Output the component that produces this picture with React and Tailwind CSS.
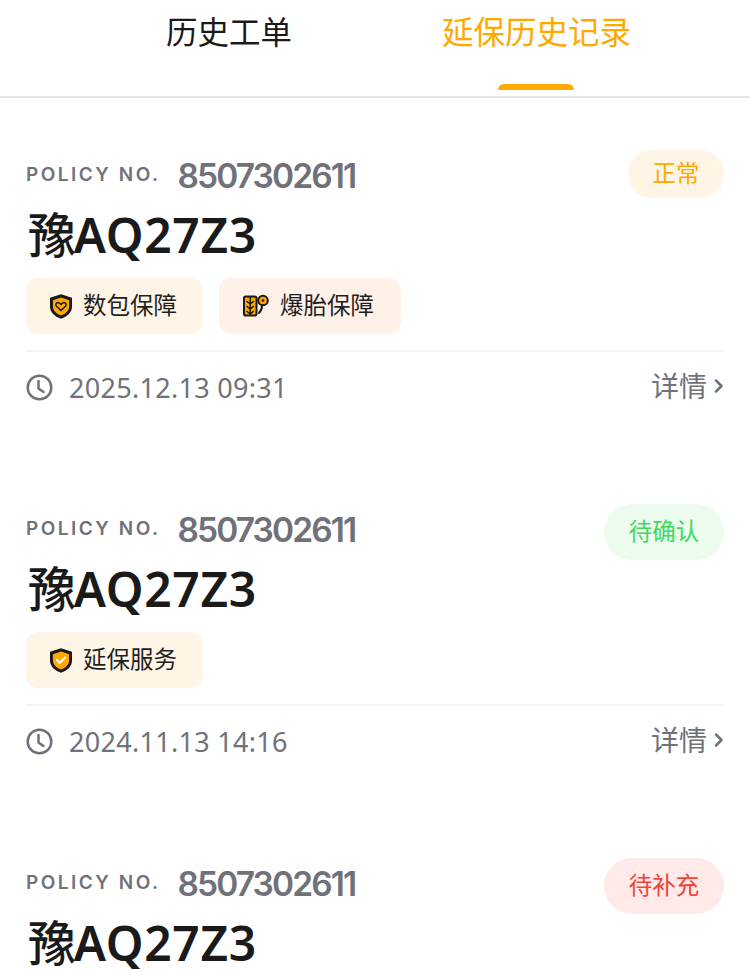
const cjk = "font-['Noto_Sans','Noto_Sans_CJK_SC',sans-serif]";

function ShieldHeart() {
  return (
    <svg width="22" height="25" viewBox="1.5 1.5 19 21" fill="none">
      <path d="M11 1.500 20.500 4.500V12c0 5-3.800 8.600-9.500 10.500C5.300 20.600 1.500 17 1.500 12V4.500Z" fill="#1a1a1a" />
      <path d="M11 4.300 18 6.500V12c0 3.500-2.800 6.200-7 7.800C6.800 18.200 4 15.500 4 12V6.500Z" fill="#ffa800" />
      <path d="M11 15.500 6.900 11.500C5.700 9.900 7.800 7.700 9.600 9L11 10.200 12.400 9C14.200 7.700 16.300 9.900 15.100 11.500Z" fill="#ffa800" stroke="#1a1a1a" strokeWidth="1.300" strokeLinejoin="round" />
    </svg>
  );
}

function ShieldCheck() {
  return (
    <svg width="22" height="25" viewBox="1.5 1.5 19 21" fill="none">
      <path d="M11 1.500 20.500 4.500V12c0 5-3.800 8.600-9.500 10.500C5.300 20.600 1.500 17 1.500 12V4.500Z" fill="#1a1a1a" />
      <path d="M11 4.300 18 6.500V12c0 3.500-2.800 6.200-7 7.800C6.800 18.200 4 15.500 4 12V6.500Z" fill="#ffa800" />
      <path d="M7.500 11.500 10 14 14.700 9.500" stroke="#fff" strokeWidth="1.800" strokeLinecap="round" strokeLinejoin="round" />
    </svg>
  );
}

function TyreGauge() {
  return (
    <svg width="26" height="24" viewBox="0 0 26 24" fill="none">
      <rect x="1" y="2.500" width="12.500" height="19" rx="1.800" fill="#ffa800" stroke="#1a1a1a" strokeWidth="2" />
      <path d="M7.200 3v18M3.500 7l3.700 3 3.700-3M3.500 12l3.700 3 3.700-3M3.500 17l3.700 3 3.700-3" stroke="#1a1a1a" strokeWidth="1.500" />
      <circle cx="20" cy="6.500" r="4.800" fill="#ffa800" stroke="#1a1a1a" strokeWidth="2" />
      <circle cx="20" cy="6.500" r="1.300" fill="#1a1a1a" />
      <path d="M19 11.500c0 4-1.500 6-3 7.500" stroke="#1a1a1a" strokeWidth="2" strokeLinecap="round" />
    </svg>
  );
}

function Clock() {
  return (
    <svg width="27" height="27" viewBox="0 0 27 27" fill="none" stroke="#71717a" strokeWidth="2.500" strokeLinecap="round" strokeLinejoin="round">
      <circle cx="13.500" cy="13.500" r="11.800" />
      <path d="M12.500 7v7.500l5 3.500" />
    </svg>
  );
}

function Chevron() {
  return (
    <svg width="10" height="16" viewBox="0 0 10 16" fill="none" stroke="#71717a" strokeWidth="2.500" strokeLinecap="round" strokeLinejoin="round">
      <path d="M2 2.500 7.500 8 2 13.500" />
    </svg>
  );
}

function Tag({ icon, text, bg, width }) {
  return (
    <div className={`flex h-14 items-center gap-[11px] rounded-xl pl-6 ${bg} ${width}`}>
      {icon}
      <span className="text-[23.500px] leading-none text-[#1f1f1f]">{text}</span>
    </div>
  );
}

function PolicyCard({ status, statusStyle, tags, time }) {
  return (
    <div className="flex h-[354px] flex-col px-[26px] pt-[52px]">
      <div className="flex h-12 items-start justify-between">
        <div className="flex h-[52px] items-center">
          <span className="mb-[1px] w-[151.500px] font-['Inter',sans-serif] text-[19px] font-semibold tracking-[2.500px] text-[#71717a]">POLICY NO.</span>
          <span className="font-['Inter',sans-serif] text-[33.500px] font-semibold tracking-[-1.900px] text-[#71717a]">8507302611</span>
        </div>
        <div className={`flex items-center justify-center rounded-full text-[23.500px] ${statusStyle}`}>{status}</div>
      </div>
      <div className="mt-[7px] ml-0.5 h-[60px] text-[48px] leading-[60px] font-semibold tracking-[0.700px] text-[#1a1a1a]">
        <span className="mr-[-3px] font-medium">豫</span>AQ27Z3
      </div>
      {tags && (
        <>
          <div className="mt-[13px] flex gap-4">
            {tags.map((t) => (
              <Tag key={t.text} {...t} />
            ))}
          </div>
          <div className="mt-4 h-0.5 bg-[#f5f5f5]" />
          <div className="mt-3.5 flex items-center justify-between">
            <div className="flex items-center gap-[16px]">
              <Clock />
              <span className="text-[27px] leading-10 tracking-[0.300px] text-[#71717a]">{time}</span>
            </div>
            <div className="mb-[3px] flex items-center gap-[7px]">
              <span className="text-[28px] leading-10 text-[#71717a]">详情</span>
              <Chevron />
            </div>
          </div>
        </>
      )}
    </div>
  );
}

export default function App() {
  const cards = [
    {
      status: "正常",
      statusStyle: "h-12 w-24 bg-[#fff5e6] text-[#ffa800]",
      time: "2025.12.13 09:31",
      tags: [
        { icon: <ShieldHeart />, text: "数包保障", bg: "bg-[#fff5e6]", width: "w-[177px]" },
        { icon: <TyreGauge />, text: "爆胎保障", bg: "bg-[#fff0e8]", width: "w-[182px]" },
      ],
    },
    {
      status: "待确认",
      statusStyle: "h-14 w-[120px] bg-[#ebfbee] text-[#40d95c]",
      time: "2024.11.13 14:16",
      tags: [{ icon: <ShieldCheck />, text: "延保服务", bg: "bg-[#fff5e6]", width: "w-[177px]" }],
    },
    {
      status: "待补充",
      statusStyle: "h-14 w-[120px] bg-[#ffe9e9] text-[#f04438]",
    },
  ];

  return (
    <div className={`h-[971px] w-[750px] overflow-hidden bg-white ${cjk}`}>
      <div className="flex h-[98px] border-b-2 border-[#e5e5e5] pl-[166px]">
        <div className="w-[276px] pt-[10px] text-[31.500px] leading-[44px] text-[#1a1a1a]">历史工单</div>
        <div className="relative pt-[10px] text-[31.500px] leading-[44px] text-[#ffa800]">
          延保历史记录
          <div className="absolute top-[84px] left-[56px] h-1.5 w-[76px] rounded-t-lg bg-[#ffa800]" />
        </div>
      </div>
      {cards.map((c, i) => (
        <PolicyCard key={i} {...c} />
      ))}
    </div>
  );
}
